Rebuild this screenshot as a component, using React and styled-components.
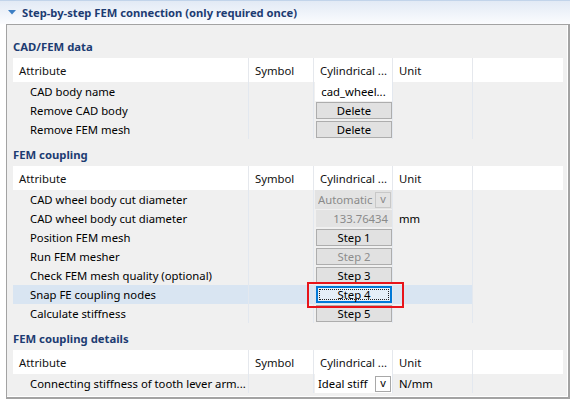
import React from "react";
import styled, { createGlobalStyle, css } from "styled-components";

const Global = createGlobalStyle`
  html, body { margin: 0; padding: 0; background: #ffffff; }
  body { font-family: "Segoe UI", "Noto Sans", "Open Sans", sans-serif; font-size: 11.3px; color: #000; }
  * { box-sizing: border-box; }
`;

const Page = styled.div`
  width: 570px;
  height: 400px;
  display: flex;
  flex-direction: column;
  background: #ffffff;
`;

const TitleBar = styled.div`
  height: 24px;
  display: flex;
  align-items: center;
  gap: 6px;
  padding-left: 8px;
  border-top: 1px solid #c2d4ea;
  background: linear-gradient(#e2eaf5, #fbfcfe);
  color: #1d3c72;
  font-weight: 700;
  font-size: 11.2px;
`;

const Panel = styled.div`
  margin-left: 6px;
  width: 564px;
  height: 375px;
  border: 1px solid #a3a3a3;
  border-right-width: 2px;
  border-bottom-width: 2px;
  background: #f0f0f0;
  box-shadow: inset -1px -1px 0 #ffffff;
  padding: 6px 0 0 6px;
  position: relative;
  display: flex;
  flex-direction: column;
`;

const SectionTitle = styled.div`
  height: 27px;
  display: flex;
  align-items: center;
  padding-top: 3px;
  color: #1d3c72;
  font-weight: 700;
`;

const cols = "235px 65px 79px 80px 91px";

const HeadRow = styled.div`
  display: grid;
  grid-template-columns: ${cols};
  height: 24px;
  background: #ffffff;
  width: 550px;
`;

const HeadCell = styled.div`
  display: flex;
  align-items: center;
  padding-left: 6px;
  white-space: nowrap;
  overflow: hidden;
  color: #111;
  ${(p) => p.$sep && css`border-left: 1px solid #e5e8ed;`}
`;

const Row = styled.div`
  display: grid;
  grid-template-columns: ${cols};
  height: 19px;
  width: 550px;
`;

const Cell = styled.div`
  display: flex;
  align-items: center;
  white-space: nowrap;
  overflow: hidden;
  position: relative;
  background: ${(p) => (p.$sel ? "#d9e5f2" : "transparent")};
  ${(p) => p.$sep && css`border-left: 1px solid #e3e8ef;`}
  ${(p) => p.$indent && css`padding-left: 17px;`}
  ${(p) => p.$unit && css`padding-left: 6px;`}
  ${(p) => p.$value && css`padding: 1px 0 1px 1px;`}
`;

const Filler = styled.div`
  border-left: 1px solid #e3e8ef;
`;

const Button = styled.div`
  width: 77px;
  height: 17px;
  margin-left: 1px;
  display: flex;
  align-items: center;
  justify-content: center;
  background: #e1e1e1;
  border: 1px solid #adadad;
  color: ${(p) => (p.$disabled ? "#8d8d8d" : "#000")};
  position: relative;
  ${(p) =>
    p.$focus &&
    css`
      border: 2px solid #0078d7;
      background: #e5eff8;
      &::after {
        content: "";
        position: absolute;
        inset: 1px;
        border: 1px dotted #222;
      }
    `}
`;

const TextValue = styled.div`
  width: 79px;
  height: 19px;
  background: #ffffff;
  display: flex;
  align-items: center;
  justify-content: center;
`;

const NumField = styled.div`
  width: 77px;
  height: 17px;
  margin-left: 1px;
  background: #e3e3e3;
  color: #8a8a8a;
  display: flex;
  align-items: center;
  justify-content: flex-end;
  padding-right: 4px;
`;

const Combo = styled.div`
  width: 79px;
  height: 19px;
  display: flex;
  align-items: center;
  background: ${(p) => (p.$disabled ? "#e3e3e3" : "#ffffff")};
  color: ${(p) => (p.$disabled ? "#8a8a8a" : "#000")};
  padding-left: 3px;
  padding-right: 1px;
`;

const ComboText = styled.span`
  flex: 1;
  overflow: hidden;
  white-space: nowrap;
  text-overflow: clip;
`;

const ComboArrow = styled.span`
  width: 16px;
  height: 16px;
  display: flex;
  align-items: center;
  justify-content: center;
  border: 1px solid ${(p) => (p.$disabled ? "#c8c8c8" : "#a8a8a8")};
  background: ${(p) => (p.$disabled ? "#e3e3e3" : "#ffffff")};
  color: ${(p) => (p.$disabled ? "#8a8a8a" : "#000")};
  font-size: 11px;
  line-height: 1;
  padding-bottom: 2px;
`;

const Marker = styled.div`
  position: absolute;
  left: 300px;
  top: 257px;
  width: 97px;
  height: 26px;
  border: 2px solid #e8141a;
  pointer-events: none;
`;

function Header() {
  return (
    <HeadRow>
      <HeadCell>Attribute</HeadCell>
      <HeadCell $sep>Symbol</HeadCell>
      <HeadCell $sep>Cylindrical ...</HeadCell>
      <HeadCell $sep>Unit</HeadCell>
      <HeadCell $sep />
    </HeadRow>
  );
}

function DataRow({ label, value, unit, sel }) {
  return (
    <Row>
      <Cell $indent $sel={sel}>{label}</Cell>
      <Cell $sep $sel={sel} />
      <Cell $sep $value $sel={sel}>{value}</Cell>
      <Cell $sep $unit $sel={sel}>{unit}</Cell>
      <Filler />
    </Row>
  );
}

export default function App() {
  return (
    <Page>
      <Global />
      <TitleBar>
        <svg width="8" height="5" viewBox="0 0 8 5">
          <polygon points="0,0 8,0 4,4.5" fill="#3d7fc4" />
        </svg>
        Step-by-step FEM connection (only required once)
      </TitleBar>
      <Panel>
        <SectionTitle>CAD/FEM data</SectionTitle>
        <Header />
        <DataRow label="CAD body name" value={<TextValue>cad_wheel...</TextValue>} />
        <DataRow label="Remove CAD body" value={<Button>Delete</Button>} />
        <DataRow label="Remove FEM mesh" value={<Button>Delete</Button>} />

        <SectionTitle>FEM coupling</SectionTitle>
        <Header />
        <DataRow
          label="CAD wheel body cut diameter"
          value={
            <Combo $disabled>
              <ComboText>Automatic</ComboText>
              <ComboArrow $disabled>v</ComboArrow>
            </Combo>
          }
        />
        <DataRow label="CAD wheel body cut diameter" value={<NumField>133.76434</NumField>} unit="mm" />
        <DataRow label="Position FEM mesh" value={<Button>Step 1</Button>} />
        <DataRow label="Run FEM mesher" value={<Button $disabled>Step 2</Button>} />
        <DataRow label="Check FEM mesh quality (optional)" value={<Button>Step 3</Button>} />
        <DataRow label="Snap FE coupling nodes" sel value={<Button $focus>Step 4</Button>} />
        <DataRow label="Calculate stiffness" value={<Button>Step 5</Button>} />

        <SectionTitle>FEM coupling details</SectionTitle>
        <Header />
        <DataRow
          label="Connecting stiffness of tooth lever arm..."
          value={
            <Combo>
              <ComboText>Ideal stiff</ComboText>
              <ComboArrow>v</ComboArrow>
            </Combo>
          }
          unit="N/mm"
        />
        <Marker />
      </Panel>
    </Page>
  );
}
